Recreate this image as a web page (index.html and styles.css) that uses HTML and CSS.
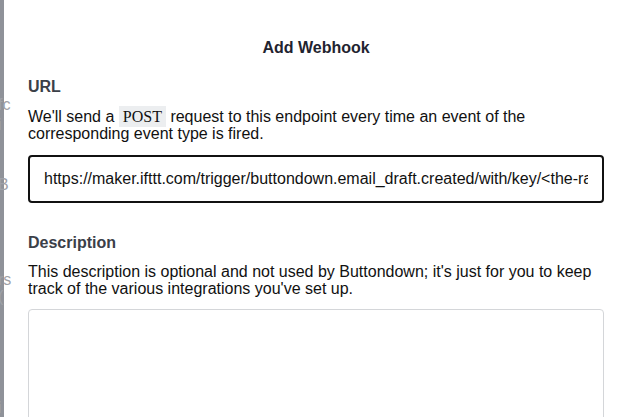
FILE: index.html
```html
<!DOCTYPE html>
<html lang="en">
<head>
<meta charset="utf-8">
<title>Add Webhook</title>
<link rel="stylesheet" href="styles.css">
</head>
<body>
<div class="page">
  <div class="backdrop">
    <span class="ghost g1">fc</span>
    <span class="ghost g2">i</span>
    <span class="ghost g3">B</span>
    <span class="ghost g4">rs</span>
    <span class="ghost g5">(</span>
    <span class="ghost g6">i</span>
  </div>
  <div class="modal">
    <h1 class="title">Add Webhook</h1>
    <section class="field">
      <h2 class="label">URL</h2>
      <p class="help">We'll send a <code class="code">POST</code> request to this endpoint every time an event of the corresponding event type is fired.</p>
      <input class="url-input" type="text" value="https://maker.ifttt.com/trigger/buttondown.email_draft.created/with/key/<the-random-key-from-ifttt>">
    </section>
    <section class="field field-desc">
      <h2 class="label">Description</h2>
      <p class="help">This description is optional and not used by Buttondown; it's just for you to keep track of the various integrations you've set up.</p>
      <textarea class="desc-input"></textarea>
    </section>
  </div>
</div>
</body>
</html>
```
FILE: styles.css
```css
html, body {
  margin: 0;
  padding: 0;
  height: 100%;
  overflow: hidden;
}
body {
  background: #8f9299;
  font-family: "Liberation Sans", Arial, sans-serif;
}
.page {
  display: flex;
  height: 417px;
  width: 617px;
  overflow: hidden;
  position: relative;
}
.backdrop {
  width: 4px;
  flex: none;
  position: relative;
  color: #9fa2a8;
  font-size: 16px;
}
.ghost {
  position: absolute;
  left: -2px;
  line-height: 1;
}
.g1 { top: 97px; }
.g2 { top: 117px; }
.g3 { top: 177px; }
.g4 { top: 272px; }
.g5 { top: 289px; }
.g6 { top: 400px; }
.modal {
  flex: none;
  width: 624px;
  box-sizing: border-box;
  background: #fff;
  padding: 39px 24px 0 24px;
  color: #1a1a1a;
}
.title {
  margin: 0;
  text-align: center;
  font-size: 16px;
  line-height: 18px;
  font-weight: 700;
  color: #1f2430;
}
.field {
  margin-top: 21px;
}
.field-desc {
  margin-top: 31px;
}
.label {
  margin: 0;
  font-size: 16px;
  line-height: 18px;
  font-weight: 700;
  color: #3b4048;
}
.help {
  margin: 12px 0 0 0;
  font-size: 16px;
  line-height: 17px;
  color: #111;
}
.field-desc .help {
  margin-top: 11px;
}
.code {
  font-family: "Liberation Serif", "Times New Roman", serif;
  font-size: 16px;
  background: #eceef0;
  padding: 2px 4px;
}
.url-input {
  display: block;
  box-sizing: border-box;
  width: 576px;
  height: 48px;
  margin-top: 13px;
  padding: 0 14px;
  border: 2px solid #111;
  border-radius: 4px;
  font-family: "Liberation Sans", Arial, sans-serif;
  font-size: 16px;
  color: #111;
  background: #fff;
  outline: none;
}
.desc-input {
  display: block;
  box-sizing: border-box;
  width: 576px;
  height: 160px;
  margin-top: 12px;
  border: 1px solid #d4d6d9;
  border-radius: 4px;
  resize: none;
  background: #fff;
}
```
